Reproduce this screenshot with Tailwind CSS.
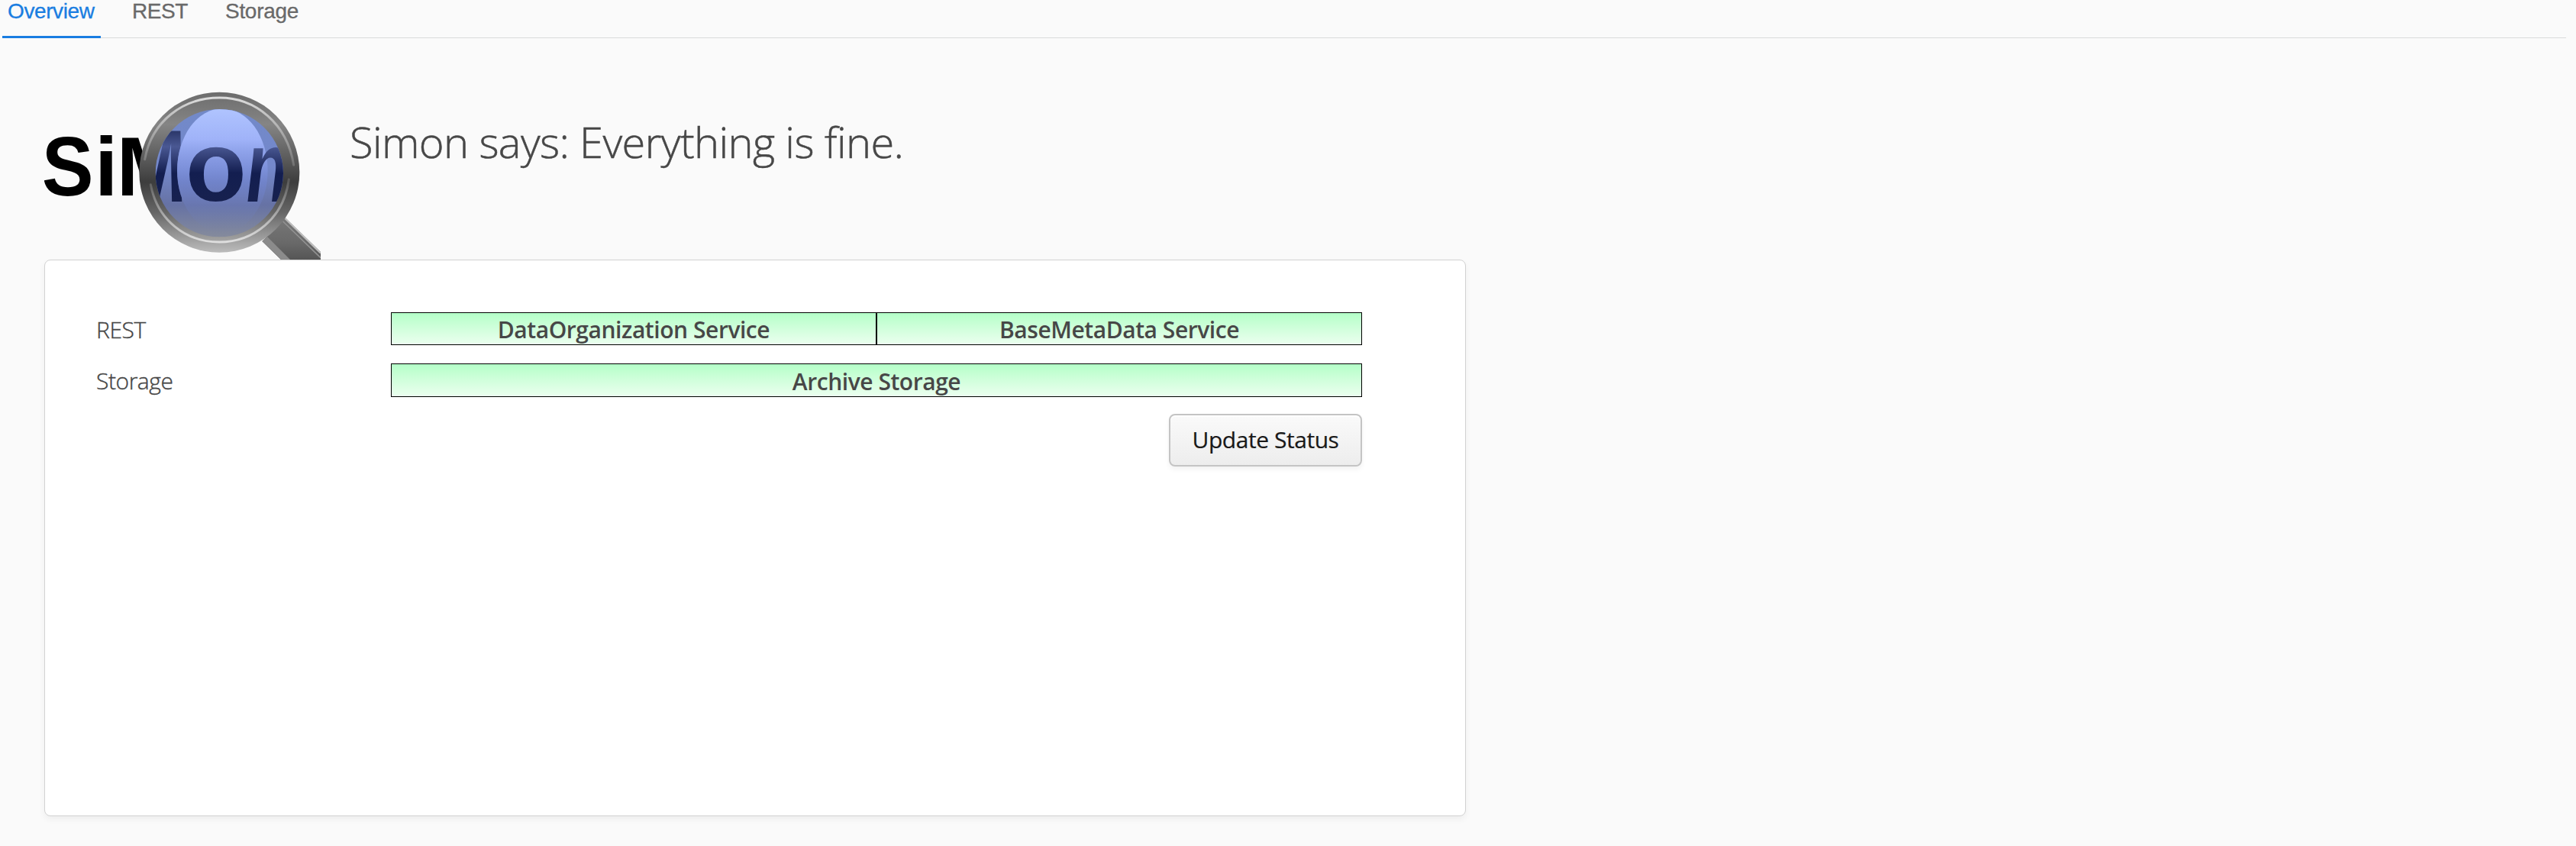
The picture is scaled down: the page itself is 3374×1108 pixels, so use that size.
<!DOCTYPE html>
<html lang="en">
<head>
<meta charset="utf-8">
<title>SiMon</title>
<script src="https://cdn.jsdelivr.net/npm/@tailwindcss/browser@4"></script>
</head>
<body class="bg-[#fafafa] h-[1108px] overflow-hidden text-[#474747] font-['Open_Sans',sans-serif]">
<nav class="ml-[3px] mr-[13px] h-[50px] flex bg-[linear-gradient(#dadcdc,#dadcdc)] bg-[length:100%_1px] bg-no-repeat bg-[position:0_49px] font-['Liberation_Sans',sans-serif] text-[28px] leading-[32px] text-[#696969]">
  <a class="w-[129px] pl-[7px] h-[51px] -mt-px border-b-3 border-[#197de1] text-[#197de1] tracking-[-0.4px] [-webkit-text-stroke:0.3px]">Overview</a>
  <a class="-mt-px ml-[41px] w-[121px] tracking-[-0.4px] [-webkit-text-stroke:0.3px]">REST</a>
  <a class="-mt-px ml-px tracking-[-0.3px] [-webkit-text-stroke:0.3px]">Storage</a>
</nav>
<header class="flex h-[290px] pl-[58px] pt-[70px]">
  <svg class="w-[362px] h-[220px] shrink-0" viewBox="54 60 1086 660" role="img" aria-label="SiMon">
    <defs>
      <linearGradient id="ring" x1="0" y1="0" x2="0" y2="1">
        <stop offset="0" stop-color="#6c6c6c"/><stop offset=".2" stop-color="#858585"/><stop offset=".38" stop-color="#626262"/><stop offset=".56" stop-color="#3d3d3d"/><stop offset=".75" stop-color="#666"/><stop offset="1" stop-color="#bcbcbc"/>
      </linearGradient>
      <linearGradient id="glass" gradientUnits="userSpaceOnUse" x1="0" y1="128" x2="0" y2="632">
        <stop offset="0" stop-color="#7289c8"/><stop offset=".45" stop-color="#7488cc"/><stop offset=".75" stop-color="#6672a4"/><stop offset="1" stop-color="#858b9c"/>
      </linearGradient>
      <linearGradient id="shine" x1="0" y1="0" x2="0" y2="1">
        <stop offset="0" stop-color="#b0c4ff"/><stop offset=".25" stop-color="#a2b5fb" stop-opacity=".95"/><stop offset=".6" stop-color="#7286d6" stop-opacity=".5"/><stop offset="1" stop-color="#6b7dc0" stop-opacity="0"/>
      </linearGradient>
      <linearGradient id="ink" gradientUnits="userSpaceOnUse" x1="0" y1="-277" x2="0" y2="0">
        <stop offset="0" stop-color="#2b3769"/><stop offset=".22" stop-color="#4a5893"/><stop offset=".6" stop-color="#131e50"/><stop offset="1" stop-color="#17214f"/>
      </linearGradient>
      <linearGradient id="rimTop" x1="0" y1="0" x2="0" y2="1">
        <stop offset="0" stop-color="#dcdcdc"/><stop offset="1" stop-color="#aaa" stop-opacity=".35"/>
      </linearGradient>
      <linearGradient id="rimLow" x1="0" y1="0" x2="0" y2="1">
        <stop offset="0" stop-color="#aaa" stop-opacity=".25"/><stop offset="1" stop-color="#dedede"/>
      </linearGradient>
      <linearGradient id="grip" x1="0" y1="0" x2="0" y2="1">
        <stop offset="0" stop-color="#777"/><stop offset=".6" stop-color="#696969"/><stop offset="1" stop-color="#555"/>
      </linearGradient>
      <clipPath id="lens"><circle cx="742" cy="380" r="251"/></clipPath>
    </defs>
    <g font-family="Liberation Sans, sans-serif" font-weight="700">
      <g font-size="328">
        <text transform="matrix(.93 0 0 1 44 468)">S</text>
        <text x="252" y="468">i</text>
        <text x="338" y="468">M</text>
      </g>
      <path d="M910 648L1000 555L1140 690V720H984Z" fill="url(#grip)"/>
      <path d="M930 630L1020 720H984L910 648Z" fill="#8b8b8b"/>
      <path d="M1000 558L1140 694" stroke="#bdbdbd" stroke-width="7"/>
      <path d="M992 570L1140 713" stroke="#929292" stroke-width="5"/>
      <circle cx="742" cy="377" r="315" fill="url(#ring)"/>
      <g clip-path="url(#lens)">
        <rect x="490" y="128" width="504" height="504" fill="url(#glass)"/>
        <text transform="matrix(.76 0 .02 1 360 492)" font-size="403" fill="url(#ink)">M</text>
        <ellipse cx="754" cy="370" rx="178" ry="244" fill="url(#glass)"/>
        <ellipse cx="754" cy="370" rx="178" ry="244" fill="url(#shine)"/>
        <g fill="url(#ink)">
          <text transform="translate(609 490)" font-size="392">o</text>
          <text transform="matrix(.7 0 -.12 1 834 492)" font-size="396">n</text>
        </g>
      </g>
      <path d="M449 326C476 175 600 84 742 84S1008 185 1034 348" fill="none" stroke="url(#rimTop)" stroke-width="9" stroke-linecap="round"/>
      <path d="M472 425C498 565 610 651 742 651S995 560 1015 405" fill="none" stroke="url(#rimLow)" stroke-width="9" stroke-linecap="round"/>
    </g>
  </svg>
  <h1 class="ml-[38px] mt-[27px] text-[56px] leading-[76px] font-light tracking-[-0.62px] whitespace-nowrap [-webkit-text-stroke:0.5px]">Simon says: Everything is fine.</h1>
</header>
<main class="ml-[58px] w-[1862px] h-[729px] rounded-[8px] border border-[#d2d2d2] bg-white shadow-[0_4px_8px_rgba(0,0,0,0.05)] pl-[67px] pr-[135px] pt-[68px] text-[30px] leading-[45px] tracking-[-0.45px]">
  <div class="grid grid-cols-[386px_1fr] grid-rows-[43px_44px] gap-y-[24px] w-[1658px]">
    <span class="font-light [-webkit-text-stroke:0.4px]">REST</span>
    <div class="grid grid-cols-[636px_1fr] h-[43px] border border-black bg-linear-to-b from-[#b4ffc8] to-[#ebffef] text-center font-semibold"><span class="h-[41px] border-r-2 border-black leading-[43px]">DataOrganization Service</span><span class="leading-[43px]">BaseMetaData Service</span></div>
    <span class="font-light [-webkit-text-stroke:0.4px]">Storage</span>
    <div class="h-[44px] border border-black bg-linear-to-b from-[#b4ffc8] to-[#ebffef] text-center font-semibold leading-[45px]">Archive Storage</div>
  </div>
  <div class="flex justify-end w-[1658px] mt-[22px]">
    <button class="w-[253px] h-[69px] pb-[2px] rounded-[8px] border-2 border-[#c4c4c4] bg-linear-to-b from-[#fafafa] to-[#ededed] text-[#191919] leading-[41px] shadow-[0_4px_6px_rgba(0,0,0,0.05),inset_0_2px_0_#fff] [-webkit-text-stroke:0.2px]">Update Status</button>
  </div>
</main>
</body>
</html>
